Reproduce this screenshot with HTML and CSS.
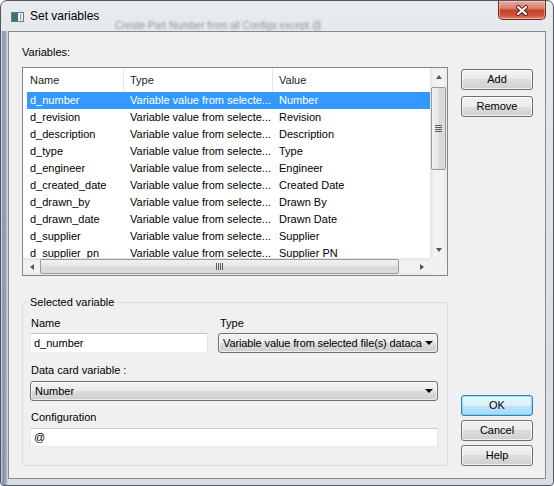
FILE: index.html
```html
<!DOCTYPE html>
<html>
<head>
<meta charset="utf-8">
<title>Set variables</title>
<link rel="stylesheet" href="styles.css">
</head>
<body>
<div class="window">
  <div class="titlebar">
    <span class="ghost ghost-b">Create Part Number from all Configs except @</span>
    <svg class="app-icon" width="13" height="10" viewBox="0 0 13 10">
      <rect x="0.5" y="0.5" width="12" height="9" fill="#e9eef1" stroke="#6c7a86"/>
      <rect x="1" y="1" width="6" height="8" fill="#3f7076"/>
      <rect x="9" y="2" width="1" height="6" fill="#8a98a4"/>
    </svg>
    <span class="title">Set variables</span>
    <div class="close">
      <svg width="14" height="11" viewBox="0 0 14 11">
        <path d="M3 2 L11 9 M11 2 L3 9" stroke="#5a1e16" stroke-width="4" stroke-linecap="round"/>
        <path d="M3 2 L11 9 M11 2 L3 9" stroke="#ffffff" stroke-width="2.2" stroke-linecap="round"/>
      </svg>
    </div>
  </div>

  <div class="client">
    <div class="main-col">
      <div class="section-label">Variables:</div>
      <div class="list">
        <div class="view">
          <div class="header">
            <div class="hcell hc1">Name</div>
            <div class="hcell hc2">Type</div>
            <div class="hcell hc3">Value</div>
          </div>
          <div class="row selected"><span class="c1">d_number</span><span class="c2">Variable value from selecte...</span><span class="c3">Number</span></div>
          <div class="row"><span class="c1">d_revision</span><span class="c2">Variable value from selecte...</span><span class="c3">Revision</span></div>
          <div class="row"><span class="c1">d_description</span><span class="c2">Variable value from selecte...</span><span class="c3">Description</span></div>
          <div class="row"><span class="c1">d_type</span><span class="c2">Variable value from selecte...</span><span class="c3">Type</span></div>
          <div class="row"><span class="c1">d_engineer</span><span class="c2">Variable value from selecte...</span><span class="c3">Engineer</span></div>
          <div class="row"><span class="c1">d_created_date</span><span class="c2">Variable value from selecte...</span><span class="c3">Created Date</span></div>
          <div class="row"><span class="c1">d_drawn_by</span><span class="c2">Variable value from selecte...</span><span class="c3">Drawn By</span></div>
          <div class="row"><span class="c1">d_drawn_date</span><span class="c2">Variable value from selecte...</span><span class="c3">Drawn Date</span></div>
          <div class="row"><span class="c1">d_supplier</span><span class="c2">Variable value from selecte...</span><span class="c3">Supplier</span></div>
          <div class="row"><span class="c1">d_supplier_pn</span><span class="c2">Variable value from selecte...</span><span class="c3">Supplier PN</span></div>
        </div>
        <div class="vscroll">
          <div class="sb-btn"><span class="tri-up"></span></div>
          <div class="vtrack"><div class="vthumb"><span class="grip-h"></span></div></div>
          <div class="sb-btn"><span class="tri-down"></span></div>
        </div>
        <div class="hscroll">
          <div class="sb-btn"><span class="tri-left"></span></div>
          <div class="htrack"><div class="hthumb"><span class="grip-v"></span></div></div>
          <div class="sb-btn"><span class="tri-right"></span></div>
        </div>
        <div class="corner"></div>
      </div>

      <fieldset class="group">
        <legend>Selected variable</legend>
        <div class="pair">
          <div class="field">
            <div class="label lbl-name">Name</div>
            <div class="textbox">d_number</div>
          </div>
          <div class="field">
            <div class="label lbl-type">Type</div>
            <div class="combo combo-type"><span class="combo-text">Variable value from selected file(s) dataca</span><span class="tri-down combo-arrow"></span></div>
          </div>
        </div>
        <div class="label lbl-block">Data card variable :</div>
        <div class="combo"><span class="combo-text">Number</span><span class="tri-down combo-arrow"></span></div>
        <div class="label lbl-block lbl-config">Configuration</div>
        <div class="textbox textbox-wide">@</div>
      </fieldset>
    </div>

    <div class="side-col">
      <div class="btn">Add</div>
      <div class="btn btn-gap6">Remove</div>
      <div class="spacer"></div>
      <div class="btn btn-default">OK</div>
      <div class="btn btn-gap4">Cancel</div>
      <div class="btn btn-gap4">Help</div>
    </div>
  </div>
</div>
</body>
</html>
```

FILE: styles.css
```css
* { box-sizing: border-box; }
html, body { margin: 0; padding: 0; background: #ffffff; }
body {
  font-family: "Liberation Sans", Arial, sans-serif;
  font-size: 11px;
  color: #000;
}

.window {
  width: 554px;
  height: 486px;
  border: 1px solid #4e5664;
  border-radius: 7px 7px 4px 4px;
  background:
    linear-gradient(to right, rgba(70,90,130,0) 0, rgba(70,90,135,.6) 2px, rgba(80,100,140,.45) 5px, rgba(80,100,140,0) 7px) 0 30px / 8px 100% no-repeat,
    linear-gradient(#e8ebee, #e0e4e8 40%, #dadee3);
  display: flex;
  flex-direction: column;
  position: relative;
  overflow: hidden;
}

.titlebar {
  height: 30px;
  flex: none;
  display: flex;
  align-items: center;
  padding-left: 10px;
  position: relative;
}
.ghost {
  position: absolute;
  top: 19px;
  line-height: 11px;
  font-size: 10px;
  color: #8d949c;
  filter: blur(1.2px);
  white-space: nowrap;
}
.ghost-b { left: 114px; }
.app-icon { flex: none; margin-top: 1px; position: relative; }
.title {
  margin-left: 6px;
  font-size: 12px;
  line-height: 15px;
  color: #000;
  position: relative;
}
.close {
  margin-left: auto;
  margin-right: 7px;
  align-self: flex-start;
  width: 48px;
  height: 19px;
  border: 1px solid #6a2c22;
  border-top: none;
  border-radius: 0 0 5px 5px;
  background: linear-gradient(#e9ab9b, #d8806c 40%, #c4432b 52%, #cf553b 80%, #e08a72);
  box-shadow: inset 0 0 0 1px rgba(255,255,255,.35);
  display: flex;
  align-items: center;
  justify-content: center;
  position: relative;
}

.client {
  flex: 1;
  margin: 0 7px 7px;
  border: 1px solid #838a93;
  background: #f0f0f0;
  display: flex;
  padding: 14px 12px 12px 13px;
}

.main-col {
  width: 426px;
  flex: none;
  display: flex;
  flex-direction: column;
  min-width: 0;
}
.section-label { line-height: 13px; margin-bottom: 8px; }

/* list view */
.list {
  height: 209px;
  border: 1px solid #828790;
  background: #fff;
  display: grid;
  grid-template-columns: minmax(0, 1fr) 17px;
  grid-template-rows: minmax(0, 1fr) 17px;
}
.view { overflow: hidden; min-width: 0; }
.header { display: flex; height: 24px; background: #fff; }
.hcell {
  line-height: 24px;
  padding-left: 7px;
  color: #1e1e1e;
  white-space: nowrap;
}
.hc1 { width: 101px; border-right: 1px solid #e3e6ea; }
.hc2 { width: 149px; padding-left: 6px; border-right: 1px solid #e3e6ea; }
.hc3 { flex: 1; padding-left: 6px; }

.row {
  display: flex;
  height: 17px;
  line-height: 17px;
  margin-left: 4px;
  white-space: nowrap;
}
.row span { overflow: hidden; }
.row .c1 { width: 97px; padding-left: 3px; }
.row .c2 { width: 149px; padding-left: 6px; }
.row .c3 { flex: 1; padding-left: 6px; }
.row.selected { background: #3399ff; color: #fff; }

/* scrollbars */
.vscroll {
  grid-column: 2;
  grid-row: 1;
  display: flex;
  flex-direction: column;
  background: linear-gradient(to right, #e4e4e4, #f2f2f2 25%, #f2f2f2 75%, #e9e9e9);
}
.hscroll {
  grid-column: 1;
  grid-row: 2;
  display: flex;
  background: linear-gradient(#e4e4e4, #f2f2f2 25%, #f2f2f2 75%, #e9e9e9);
}
.corner { grid-column: 2; grid-row: 2; background: #f0f0f0; }
.sb-btn {
  width: 17px;
  height: 17px;
  flex: none;
  display: flex;
  align-items: center;
  justify-content: center;
}
.vtrack { flex: 1; padding: 2px 1px 0 1px; }
.vthumb {
  height: 83px;
  border: 1px solid #9a9a9a;
  border-radius: 2px;
  background: linear-gradient(to right, #f1f1f1, #e6e6e6 45%, #d8d8d8 55%, #dcdcdc);
  display: flex;
  align-items: center;
  justify-content: center;
}
.grip-h {
  width: 7px;
  height: 7px;
  background: repeating-linear-gradient(#5d5d5d 0 1px, transparent 1px 2px);
}
.htrack { flex: 1; padding: 1px 0 1px 0; }
.hthumb {
  width: 359px;
  height: 15px;
  border: 1px solid #9a9a9a;
  border-radius: 2px;
  background: linear-gradient(#f1f1f1, #e6e6e6 45%, #d8d8d8 55%, #dcdcdc);
  display: flex;
  align-items: center;
  justify-content: center;
}
.grip-v {
  width: 7px;
  height: 7px;
  background: repeating-linear-gradient(to right, #5d5d5d 0 1px, transparent 1px 2px);
}
.tri-up, .tri-down, .tri-left, .tri-right { width: 0; height: 0; display: block; }
.tri-up { border-left: 3.5px solid transparent; border-right: 3.5px solid transparent; border-bottom: 4px solid #555; }
.tri-down { border-left: 3.5px solid transparent; border-right: 3.5px solid transparent; border-top: 4px solid #555; }
.tri-left { border-top: 3.5px solid transparent; border-bottom: 3.5px solid transparent; border-right: 4px solid #555; }
.tri-right { border-top: 3.5px solid transparent; border-bottom: 3.5px solid transparent; border-left: 4px solid #555; }

/* group */
.group {
  margin: 20px 0 0 0;
  border: 1px solid #d5dfe5;
  border-radius: 3px;
  padding: 8px 9px 18px 7px;
  min-width: 0;
}
.group legend {
  padding: 0 2px;
  margin-left: -2px;
  line-height: 13px;
  font-size: 11px;
}
.pair {
  display: grid;
  grid-template-columns: 178px minmax(0, 1fr);
  column-gap: 10px;
}
.field { min-width: 0; }
.label { line-height: 13px; margin-bottom: 3px; }
.lbl-name { padding-left: 1px; }
.lbl-type { padding-left: 2px; }
.lbl-block { margin-top: 11px; margin-bottom: 4px; padding-left: 1px; }
.lbl-config { margin-top: 10px; }

.textbox {
  height: 20px;
  border: 1px solid;
  border-color: #c6c8cc #e3e6ea #e8ebef #e3e6ea;
  background: #fff;
  padding-left: 3px;
  line-height: 18px;
  white-space: nowrap;
  overflow: hidden;
}
.textbox-wide { height: 19px; line-height: 17px; }

.combo {
  height: 20px;
  border: 1px solid #707070;
  border-radius: 3px;
  background: linear-gradient(#f2f2f2, #ebebeb 50%, #dddddd 50%, #cfcfcf);
  box-shadow: inset 0 0 0 1px rgba(255,255,255,.6);
  display: flex;
  align-items: center;
  padding: 0 2px 0 4px;
  min-width: 0;
  overflow: hidden;
}
.combo-text {
  flex: 1;
  min-width: 0;
  white-space: nowrap;
  overflow: hidden;
  line-height: 18px;
}
.combo-type .combo-text { margin-right: 1px; letter-spacing: -0.12px; }
.combo-arrow {
  border-left-width: 4px;
  border-right-width: 4px;
  border-top: 4px solid #000;
  flex: none;
  margin-right: 2px;
}

/* buttons */
.side-col {
  width: 72px;
  flex: none;
  margin-left: 13px;
  padding-top: 23px;
  display: flex;
  flex-direction: column;
}
.spacer { flex: 1; }
.btn {
  height: 21px;
  border: 1px solid #707070;
  border-radius: 3px;
  background: linear-gradient(#f2f2f2, #ebebeb 50%, #dddddd 50%, #cfcfcf);
  box-shadow: inset 0 0 0 1px rgba(255,255,255,.7);
  text-align: center;
  line-height: 19px;
  color: #000;
}
.btn-gap6 { margin-top: 6px; }
.btn-gap4 { margin-top: 4px; }
.btn-default {
  border-color: #3c7fb1;
  background: linear-gradient(#eaf6fd, #d9f0fc 50%, #bee6fd 50%, #a7d9f5);
  box-shadow: inset 0 0 0 1px rgba(72,210,251,.55);
}
```
